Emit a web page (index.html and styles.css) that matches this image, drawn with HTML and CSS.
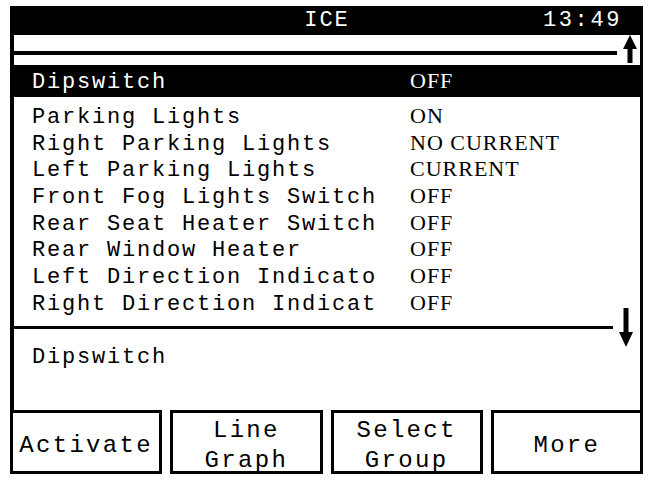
FILE: index.html
```html
<!DOCTYPE html>
<html lang="en">
<head>
    <meta charset="UTF-8">
    <title>ICE</title>
    <link rel="stylesheet" href="styles.css">
</head>
<body>

<div class="screen">
    <div class="titlebar">
        <span></span>
        <span class="title">ICE</span>
        <span class="clock">13:49</span>
    </div>

    <div class="track">
        <div class="track-line"></div>
        <svg class="arrow-up" width="14" height="28" viewBox="0 0 14 28">
            <polygon points="7,0 14,14 0,14" fill="#000"/>
            <rect x="4.5" y="10" width="5" height="18" fill="#000"/>
        </svg>
    </div>

    <div class="row row-selected">
        <span class="label">Dipswitch</span>
        <span class="value">OFF</span>
    </div>

    <div class="list">
        <div class="row"><span class="label">Parking Lights</span><span class="value">ON</span></div>
        <div class="row"><span class="label">Right Parking Lights</span><span class="value">NO CURRENT</span></div>
        <div class="row"><span class="label">Left Parking Lights</span><span class="value">CURRENT</span></div>
        <div class="row"><span class="label">Front Fog Lights Switch</span><span class="value">OFF</span></div>
        <div class="row"><span class="label">Rear Seat Heater Switch</span><span class="value">OFF</span></div>
        <div class="row"><span class="label">Rear Window Heater</span><span class="value">OFF</span></div>
        <div class="row"><span class="label">Left Direction Indicato</span><span class="value">OFF</span></div>
        <div class="row"><span class="label">Right Direction Indicat</span><span class="value">OFF</span></div>

        <!-- scroll indicator -->
        <svg class="arrow-down" width="14" height="39" viewBox="0 0 14 39">
            <rect x="4.5" y="0" width="5" height="28" fill="#000"/>
            <polygon points="0,24 14,24 7,39" fill="#000"/>
        </svg>
    </div>

    <div class="divider"></div>

    <div class="info">Dipswitch</div>
</div>

<div class="softkeys">
    <div class="key">Activate</div>
    <div class="key">Line<br>Graph</div>
    <div class="key">Select<br>Group</div>
    <div class="key">More</div>
</div>

</body>
</html>
```

FILE: styles.css
```css
/* Stili generali */
body {
    margin: 0;
    padding: 0;
    background-color: #fff;
    color: #000;
    font-family: 'Liberation Mono', 'DejaVu Sans Mono', monospace;
}

.screen {
    margin: 6px 0 0 10px;
    width: 633px;
    box-sizing: border-box;
    border-left: 4px solid #000;
    border-right: 3px solid #000;
}

/* Barra del titolo */
.titlebar {
    height: 29px;
    background-color: #000;
    color: #fff;
    display: grid;
    grid-template-columns: 1fr auto 1fr;
    align-items: center;
    font-size: 22px;
    letter-spacing: 2px;
    padding-right: 18px;
    padding-left: 18px;
}

.clock {
    justify-self: end;
    letter-spacing: 2.6px;
}

.track {
    height: 30px;
    display: flex;
    align-items: flex-start;
}

.track-line {
    flex: 1;
    height: 4px;
    margin-top: 16px;
    margin-right: 6px;
    background-color: #000;
}

.arrow-up {
    display: block;
    margin-right: 3px;
}

/* Righe */
.row {
    display: flex;
    align-items: baseline;
    height: 26.7px;
    line-height: 26.7px;
    padding-left: 18px;
    font-size: 22px;
}

.label {
    width: 378px;
    letter-spacing: 1.8px;
    white-space: pre;
}

.value {
    font-family: 'Liberation Serif', 'Times New Roman', serif;
    font-size: 22px;
    letter-spacing: 1px;
}

.row-selected {
    height: 32px;
    line-height: 32px;
    background-color: #000;
    color: #fff;
}

.list {
    position: relative;
    height: 229px;
    padding-top: 6px;
    box-sizing: border-box;
}

.arrow-down {
    position: absolute;
    right: 7px;
    top: 211px;
}

.divider {
    height: 3px;
    margin-right: 27px;
    background-color: #000;
}

.info {
    height: 81px;
    box-sizing: border-box;
    padding: 16px 0 0 18px;
    font-size: 22px;
    letter-spacing: 1.8px;
    line-height: 26.7px;
}

/* Tasti funzione */
.softkeys {
    margin-left: 10px;
    width: 633px;
    display: flex;
    gap: 8px;
}

.key {
    flex: 1;
    height: 64px;
    box-sizing: border-box;
    border: 3px solid #000;
    display: flex;
    align-items: center;
    justify-content: center;
    text-align: center;
    padding-top: 8px;
    font-size: 24px;
    letter-spacing: 2.3px;
    line-height: 30px;
}
```
